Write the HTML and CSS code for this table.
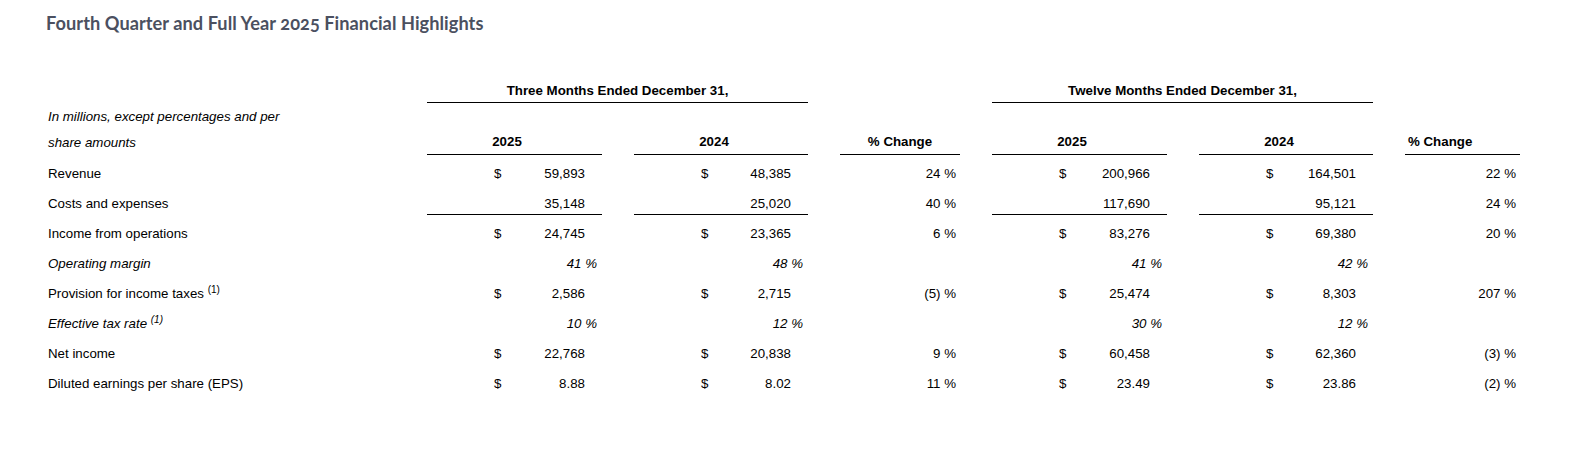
FILE: index.html
```html
<!DOCTYPE html>
<html lang="en">
<head>
<meta charset="utf-8">
<title>Fourth Quarter and Full Year 2025 Financial Highlights</title>
<link rel="stylesheet" href="styles.css">
</head>
<body>
<div class="page">
  <h1 class="title">Fourth Quarter and Full Year 2025 Financial Highlights</h1>

  <div class="fin">
    <div class="row row-group">
      <div class="lbl"></div>
      <div class="grp">Three Months Ended December 31,</div>
      <div></div>
      <div class="grp">Twelve Months Ended December 31,</div>
      <div></div>
    </div>

    <div class="row row-head">
      <div class="lbl lbl-note">In millions, except percentages and per share amounts</div>
      <div class="h h-y w175">2025</div>
      <div class="h h-y w174">2024</div>
      <div class="h h-pc">% Change</div>
      <div class="h h-y w175">2025</div>
      <div class="h h-y w174">2024</div>
      <div class="h h-pc2">% Change</div>
    </div>

    <div class="row">
      <div class="lbl">Revenue</div>
      <div class="y"><span>$</span><span class="num">59,893</span></div>
      <div class="y"><span>$</span><span class="num">48,385</span></div>
      <div class="pc">24 %</div>
      <div class="y"><span>$</span><span class="num">200,966</span></div>
      <div class="y"><span>$</span><span class="num">164,501</span></div>
      <div class="pc">22 %</div>
    </div>

    <div class="row">
      <div class="lbl">Costs and expenses</div>
      <div class="y ul"><span class="num">35,148</span></div>
      <div class="y ul"><span class="num">25,020</span></div>
      <div class="pc">40 %</div>
      <div class="y ul"><span class="num">117,690</span></div>
      <div class="y ul"><span class="num">95,121</span></div>
      <div class="pc">24 %</div>
    </div>

    <div class="row">
      <div class="lbl">Income from operations</div>
      <div class="y"><span>$</span><span class="num">24,745</span></div>
      <div class="y"><span>$</span><span class="num">23,365</span></div>
      <div class="pc">6 %</div>
      <div class="y"><span>$</span><span class="num">83,276</span></div>
      <div class="y"><span>$</span><span class="num">69,380</span></div>
      <div class="pc">20 %</div>
    </div>

    <div class="row row-it">
      <div class="lbl">Operating margin</div>
      <div class="y ratio"><span class="num">41 %</span></div>
      <div class="y ratio"><span class="num">48 %</span></div>
      <div class="pc"></div>
      <div class="y ratio"><span class="num">41 %</span></div>
      <div class="y ratio"><span class="num">42 %</span></div>
      <div class="pc"></div>
    </div>

    <div class="row">
      <div class="lbl">Provision for income taxes <sup class="fn">(1)</sup></div>
      <div class="y"><span>$</span><span class="num">2,586</span></div>
      <div class="y"><span>$</span><span class="num">2,715</span></div>
      <div class="pc">(5) %</div>
      <div class="y"><span>$</span><span class="num">25,474</span></div>
      <div class="y"><span>$</span><span class="num">8,303</span></div>
      <div class="pc">207 %</div>
    </div>

    <div class="row row-it">
      <div class="lbl">Effective tax rate <sup class="fn">(1)</sup></div>
      <div class="y ratio"><span class="num">10 %</span></div>
      <div class="y ratio"><span class="num">12 %</span></div>
      <div class="pc"></div>
      <div class="y ratio"><span class="num">30 %</span></div>
      <div class="y ratio"><span class="num">12 %</span></div>
      <div class="pc"></div>
    </div>

    <div class="row">
      <div class="lbl">Net income</div>
      <div class="y"><span>$</span><span class="num">22,768</span></div>
      <div class="y"><span>$</span><span class="num">20,838</span></div>
      <div class="pc">9 %</div>
      <div class="y"><span>$</span><span class="num">60,458</span></div>
      <div class="y"><span>$</span><span class="num">62,360</span></div>
      <div class="pc">(3) %</div>
    </div>

    <div class="row">
      <div class="lbl">Diluted earnings per share (EPS)</div>
      <div class="y"><span>$</span><span class="num">8.88</span></div>
      <div class="y"><span>$</span><span class="num">8.02</span></div>
      <div class="pc">11 %</div>
      <div class="y"><span>$</span><span class="num">23.49</span></div>
      <div class="y"><span>$</span><span class="num">23.86</span></div>
      <div class="pc">(2) %</div>
    </div>
  </div>
</div>
</body>
</html>
```

FILE: styles.css
```css
html, body {
  margin: 0;
  padding: 0;
  background: #ffffff;
}

.page {
  padding: 12px 0 0 46px;
}

.title {
  margin: 0;
  font-family: Lato, "Open Sans", sans-serif;
  font-weight: 700;
  font-size: 18.2px;
  letter-spacing: 0.05px;
  line-height: 22px;
  color: #4b5060;
  font-variant-numeric: oldstyle-nums;
}

.fin {
  margin: 49px 0 0 2px;
  font-family: "Liberation Sans", Arial, sans-serif;
  font-size: 13.3px;
  line-height: 15px;
  color: #000000;
}

.row {
  display: grid;
  grid-template-columns: 347px 175px 174px 120px 175px 174px 115px;
  column-gap: 32px;
}

.row > div {
  box-sizing: border-box;
  height: 30px;
  padding-top: 11px;
  white-space: nowrap;
}

/* group header row */
.row-group > div {
  height: 20px;
  padding-top: 0;
}

.grp {
  grid-column: span 2;
  text-align: center;
  font-weight: 700;
  border-bottom: 1px solid #000;
}

/* column header row */
.row-head {
  grid-template-rows: 52px;
}

.row-head > div {
  height: 52px;
  padding-top: 0;
}

.lbl-note {
  white-space: normal !important;
  font-style: italic;
  line-height: 26px;
  max-width: 250px;
  margin-top: 1px;
}

.h {
  display: flex;
  align-items: flex-end;
  padding-bottom: 5px;
  font-weight: 700;
  border-bottom: 1px solid #000;
}

.h-y {
  justify-content: center;
}

.h-y.w175 {
  padding-right: 15px;
}

.h-y.w174 {
  padding-right: 14px;
}

.h-pc {
  justify-content: center;
}

.h-pc2 {
  justify-content: flex-start;
  padding-left: 3px;
}

/* data cells */
.y {
  display: flex;
  padding-left: 67px;
  padding-right: 17px;
}

.y .num {
  margin-left: auto;
}

.y.ul {
  border-bottom: 1px solid #000;
}

.y.ratio {
  padding-right: 5px;
}

.pc {
  text-align: right;
  padding-right: 4px;
}

.row-it .lbl,
.row-it .y {
  font-style: italic;
}

.fn {
  font-size: 10px;
  line-height: 0;
  vertical-align: 5px;
}
```
